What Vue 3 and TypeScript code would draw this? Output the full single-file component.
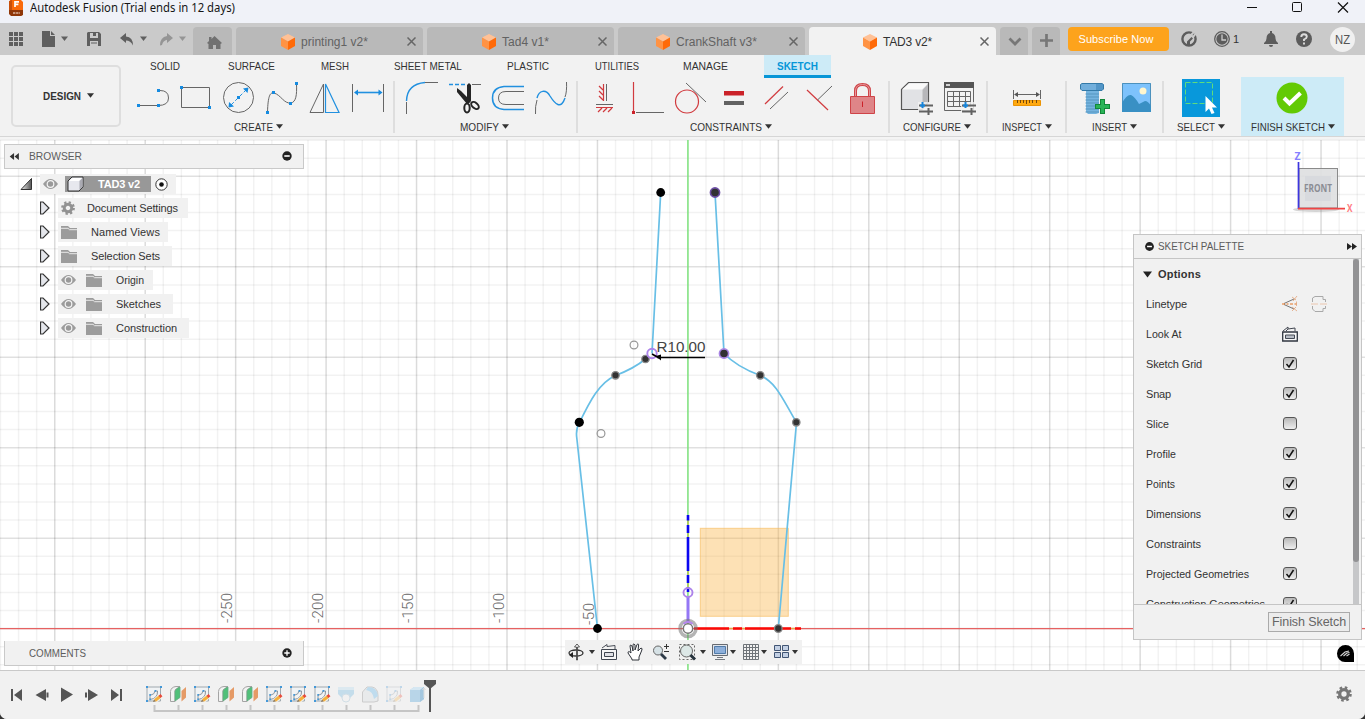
<script setup lang="ts">
import { h } from 'vue'

interface LabelProps { t: string; w: number; s?: number; b?: boolean; f?: string }

const pen = document.createElement('canvas').getContext('2d')!

/* Text run that occupies exactly `w` pixels: condensed when too wide, tracked out when too narrow. */
const Label = (p: LabelProps) => {
  const size = p.s ?? 11
  const family = p.f ?? 'Liberation Sans'
  pen.font = `${p.b ? 700 : 400} ${size}px "${family}"`
  const natural = pen.measureText(p.t).width
  const tight = natural > p.w * 1.03
  const spacing = tight ? 0 : (p.w - natural) / p.t.length
  return h('span', {
    style: {
      display: 'inline-block',
      whiteSpace: 'nowrap',
      width: `${p.w}px`,
      font: `${p.b ? 700 : 400} ${size}px/16px "${family}", sans-serif`,
      letterSpacing: `${spacing.toFixed(3)}px`,
    },
  }, tight
    ? [h('span', { style: { display: 'inline-block', transformOrigin: '0 50%', transform: `scaleX(${(p.w / natural).toFixed(4)})` } }, p.t)]
    : p.t)
}
Label.props = { t: String, w: Number, s: Number, b: Boolean, f: String }

const Caret = () => h('svg', { width: 7, height: 5, viewBox: '0 0 7 5', style: { marginTop: '-2px' } }, [
  h('path', { d: 'M0 .3H7L3.5 4.8Z', fill: 'currentColor' }),
])

const docs = [
  { name: 'printing1 v2*', w: 67, pad: 45, active: false },
  { name: 'Tad4 v1*', w: 47, pad: 55, active: false },
  { name: 'CrankShaft v3*', w: 81, pad: 38, active: false },
  { name: 'TAD3 v2*', w: 49, pad: 54, active: true },
]

const modes = [
  { name: 'SOLID', w: 30, gap: 29 },
  { name: 'SURFACE', w: 47, gap: 48 },
  { name: 'MESH', w: 28, gap: 46 },
  { name: 'SHEET METAL', w: 68, gap: 45 },
  { name: 'PLASTIC', w: 42, gap: 45 },
  { name: 'UTILITIES', w: 44, gap: 46 },
  { name: 'MANAGE', w: 45, gap: 44 },
]

const tree = [
  { name: 'Document Settings', w: 91, box: 130, eye: false, gear: true },
  { name: 'Named Views', w: 69, box: 110, eye: false, gear: false },
  { name: 'Selection Sets', w: 69, box: 114, eye: false, gear: false },
  { name: 'Origin', w: 28, box: 95, eye: true, gear: false },
  { name: 'Sketches', w: 45, box: 115, eye: true, gear: false },
  { name: 'Construction', w: 61, box: 131, eye: true, gear: false },
]

const options = [
  { name: 'Sketch Grid', w: 56, on: true },
  { name: 'Snap', w: 25, on: true },
  { name: 'Slice', w: 23, on: false },
  { name: 'Profile', w: 30, on: true },
  { name: 'Points', w: 29, on: true },
  { name: 'Dimensions', w: 55, on: true },
  { name: 'Constraints', w: 55, on: false },
  { name: 'Projected Geometries', w: 103, on: true },
  { name: 'Construction Geometries', w: 119, on: true },
]

const timeline = ['sketch', 'plane', 'sketch', 'plane', 'plane', 'sketch', 'sketch', 'sketch', 'loft', 'fillet', 'faded', 'extrude']

const step = 18.09
const columns = Array.from({ length: 76 }, (_, i) => ({ at: 687.9 + (i - 38) * step, major: (i - 38) % 5 === 0 }))
const rows = Array.from({ length: 30 }, (_, i) => ({ at: 628.6 + (i - 27) * step, major: (i - 27) % 5 === 0 }))
const ruler = [
  { t: '-250', x: 232 }, { t: '-200', x: 322.7 }, { t: '-150', x: 413 }, { t: '-100', x: 503.7 },
]
</script>

<template>
  <div class="app">
    <header class="titlebar">
      <svg class="logo" width="15" height="16" viewBox="0 0 15 16">
        <path d="M1 0H12L14 2V14L12 16H3L1 14Z" fill="#fa6a0a" />
        <path d="M0 1L3 0V10H0Z" fill="#c8500a" /><path d="M0 10H14V15L12 16H2L0 14Z" fill="#8f3708" />
        <path d="M6 7V1.8H10M6 4.4H9.4" stroke="#fff" stroke-width="1.7" fill="none" />
        <path d="M4 13H11" stroke="#ddb7a0" stroke-width="1.6" stroke-dasharray="2.4 .7" />
      </svg>
      <Label class="apptitle" t="Autodesk Fusion (Trial ends in 12 days)" :w="205" :s="12" f="Noto Sans" />
      <svg class="winbtns" width="130" height="23" viewBox="1235 0 130 23" fill="none" stroke="#111" stroke-width="1">
        <path d="M1247 7.5H1257" /><rect x="1292.5" y="2.5" width="9" height="9" rx="1" />
        <path d="M1338 2.5L1348 12.500M1348 2.500L1338 12.500" stroke-width="1.2" />
      </svg>
    </header>

    <div class="docbar">
      <svg class="quick" width="193" height="32" viewBox="0 23 193 32" fill="#5f5f5f">
        <path d="M9 32h4v4h-4zM14 32h4v4h-4zM19 32h4v4h-4zM9 37h4v4h-4zM14 37h4v4h-4zM19 37h4v4h-4zM9 42h4v4h-4zM14 42h4v4h-4zM19 42h4v4h-4z" />
        <path d="M42 31H50V36H55V47H42ZM51 31L55 35H51Z" /><path d="M61 36.500H68L64.500 41Z" />
        <path fill-rule="evenodd" d="M88 32H99L101 34V46H87V33ZM90 33V38H98V33H96V36H93V33ZM90 41V46H98V41Z" /><path d="M91 42.500H97V43.500H91Z" />
        <path d="M120 38L126 33V36.500Q133 37 133 45.500Q130.500 40.500 126 40.500V43Z" /><path d="M140 36.500H147L143.500 41Z" />
        <g fill="#959595"><path d="M173 38L167 33V36H167Q160 37 160 45.500L162 45Q163 40.500 167 39.700V43Z" /><path d="M179 36.500H186L182.500 41Z" /></g>
      </svg>
      <div class="hometab">
        <svg width="15" height="13" viewBox="0 0 15 13"><path d="M7.500 0L15 7L13.500 8V13H9V9H6V13H1.500V8L0 7L2 5V1H4.500V3Z" fill="#717171" /></svg>
      </div>
      <div v-for="d in docs" :key="d.name" class="doctab" :class="{ active: d.active }" :style="{ paddingLeft: d.pad + 'px' }">
        <svg width="14" height="16" viewBox="0 0 14 16"><path d="M7 0L14 3.500L7 7.500L0 3.500Z" fill="#ffc196" /><path d="M0 3.500L7 7.500V16L0 12Z" fill="#ff9344" /><path d="M14 3.500V12L7 16V7.500Z" fill="#ff6a08" /></svg>
        <Label class="docname" :t="d.name" :w="d.w" :s="12" />
        <svg class="close" width="9" height="9" viewBox="0 0 9 9"><path d="M.5.5L8.500 8.500M8.500.5L.5 8.500" stroke="currentColor" stroke-width="1.500" /></svg>
      </div>
      <div class="mini"><svg width="28" height="28" viewBox="0 0 28 28"><path d="M9.500 11.500L15 17L20.500 11.500" fill="none" stroke="#777" stroke-width="2.700" /></svg></div>
      <div class="mini"><svg width="28" height="28" viewBox="0 0 28 28"><path d="M8 13.500H21M14.500 7V20" stroke="#777" stroke-width="2.700" /></svg></div>
      <button class="subscribe"><Label t="Subscribe Now" :w="75" :s="11" /></button>
      <svg class="status" width="67" height="32" viewBox="1169 23 67 32">
        <circle cx="1189" cy="39" r="6.600" fill="none" stroke="#5c5c5c" stroke-width="2.400" />
        <path d="M1190 36L1194.500 31.500M1191 40L1196 33" stroke="#cacaca" stroke-width="2" />
        <path d="M1187 45V41.500L1191.500 37L1193 38.500L1190 41.500V45Z" fill="#5c5c5c" />
        <circle cx="1222" cy="39" r="7.300" fill="none" stroke="#5c5c5c" stroke-width="1.300" /><circle cx="1222" cy="39" r="5.700" fill="#5c5c5c" />
        <path d="M1222 34.500V40H1226" fill="none" stroke="#ccc" stroke-width="1.300" />
      </svg>
      <Label class="jobs" t="1" :w="6" :s="11" />
      <svg width="90" height="32" viewBox="1239 23 90 32">
        <path d="M1270 31H1272V33Q1275.500 34 1275.500 38.500Q1275.500 41.500 1278 43V44H1264V43Q1266.500 41.500 1266.500 38.500Q1266.500 34 1270 33ZM1269 45H1273Q1273 47 1271 47Q1269 47 1269 45" fill="#5c5c5c" />
        <circle cx="1304" cy="39" r="8" fill="#5c5c5c" />
        <path d="M1301.300 37Q1301.300 34.200 1304 34.200Q1306.800 34.200 1306.800 36.700Q1306.800 38.200 1304 39.500V41M1304 42.400V44.400" fill="none" stroke="#ddd" stroke-width="1.900" />
      </svg>
      <div class="avatar"><Label t="NZ" :w="15" :s="12" /></div>
    </div>

    <section class="ribbon">
      <div class="workspace"><Label t="DESIGN" :w="38" :s="11" b /><Caret /></div>
      <div class="ribbon-main">
        <nav class="modes">
          <Label v-for="m in modes" :key="m.name" :t="m.name" :w="m.w" :style="{ marginLeft: m.gap + 'px' }" />
          <div class="mode-on"><Label t="SKETCH" :w="41" b /></div>
        </nav>
        <div class="tools">
          <div class="group g-create">
            <div class="icons" fill="none">
              <svg width="39" height="40" viewBox="136 78 39 40"><path d="M140 105.500H158Q168.500 105.500 168.500 98Q168.500 90.500 160 90.500" class="gl" /><path class="bf" d="M137 104h3v3h-3zM157 104h3v3h-3zM157 89h3v3h-3z" /></svg>
              <svg width="42" height="40" viewBox="175 78 42 40"><path d="M181.500 87.500H209.500V107.500H181.500Z" class="gl" /><path class="bf" d="M180 86h3v3h-3zM208 106h3v3h-3z" /></svg>
              <svg width="43" height="40" viewBox="217 78 43 40"><circle cx="238.500" cy="97.500" r="15" class="gl" /><path class="bl" d="M231 105L246 90" stroke-dasharray="4 2" /><path class="bf" d="M237 96h3v3h-3zM243 88.500L248.500 87.500L247.500 93ZM229 102L228.500 107.500L234 106.500Z" /></svg>
              <svg width="43" height="40" viewBox="260 78 43 40"><path d="M267.500 112C268 96 270 92 274 93C281 95 284 104 291 103C296 102 297 95 296.500 84" class="gl" /><path class="bf" d="M266 111h3v3h-3zM272 91h3v3h-3zM289 102h3v3h-3zM295 82h3v3h-3z" /></svg>
              <svg width="41" height="40" viewBox="303 78 41 40"><path d="M323.500 84V112.500H310Z" class="gl" /><path d="M325.500 84V112.500H339Z" class="bl" stroke-width="1.200" /></svg>
              <svg width="46" height="40" viewBox="344 78 46 40"><path d="M352.500 84V112M383.500 84V112" class="gl" /><path class="bl" d="M356 92.500H380" stroke-width="1.600" /><path class="bf" d="M354 92.500L358 89.500V95.500ZM382.500 92.500L378.500 89.500V95.500Z" /></svg>
            </div>
            <div class="caption"><Label t="CREATE" :w="39" /><Caret /></div>
          </div>
          <div class="group g-modify">
            <div class="icons">
              <svg width="42" height="40" viewBox="400 78 42 40"><path d="M406.500 114V102M425 82.500H438" class="gl" /><path d="M406.500 101Q407 84 425 82.500" class="bl" stroke-width="1.400" /></svg>
              <svg width="44" height="40" viewBox="442 78 44 40"><path d="M449 84.500H467" class="bl" stroke-width="1.500" stroke-dasharray="4 2" /><path d="M472 84.500H481" class="gl" /><path d="M457 88L461 91L468 98L471 102L467 104L457 92ZM467 85L469 83L471 85V101H467Z" fill="#252525" /><ellipse cx="467" cy="108" rx="2.700" ry="4.400" fill="none" stroke="#252525" stroke-width="2" /><ellipse cx="475" cy="105.500" rx="2.700" ry="4.400" transform="rotate(-50 475 105.500)" fill="none" stroke="#252525" stroke-width="2" /></svg>
              <svg width="44" height="40" viewBox="486 78 44 40"><path d="M524 86.500H504Q492.500 87.500 492.500 98Q492.500 108.500 504 109.500H524" class="bl" stroke-width="1.500" /><path d="M524 91.500H506Q498.500 91.500 498.500 98Q498.500 104.500 506 104.500H524" class="gl" /></svg>
              <svg width="42" height="40" viewBox="530 78 42 40"><path d="M535.500 114Q535 106 537 100M566.500 82Q567 92 565 97" class="gl" /><path d="M537 98C539 90 546 89 550 96C555 104 561 110 565 98" class="bl" stroke-width="1.400" /></svg>
            </div>
            <div class="caption"><Label t="MODIFY" :w="39" /><Caret /></div>
          </div>
          <div class="group g-constraints">
            <div class="icons">
              <svg width="39" height="40" viewBox="586 78 39 40"><path class="rl" d="M603.500 84V101M599 86L603 90M599 91L603 95M599 96L603 100M596 107.500H613M598 112L602 108M603 112L607 108M608 112L612 108" /><path class="gl" d="M606.500 84V101M596 104.500H613" /></svg>
              <svg width="45" height="40" viewBox="625 78 45 40"><path class="rl" d="M633.500 82V112" /><path class="gl" d="M636 112.500H664" /><path d="M632 111h3v3h-3z" fill="#cb2229" /></svg>
              <svg width="45" height="40" viewBox="670 78 45 40"><circle cx="687" cy="101.500" r="11.500" class="rl" /><path class="gl" d="M686 83L706 102" /></svg>
              <svg width="41" height="40" viewBox="715 78 41 40"><path d="M724 91h20v4.500h-20z" fill="#cb2229" /><path d="M724 101h20v4h-20z" fill="#626262" /></svg>
              <svg width="46" height="40" viewBox="756 78 46 40"><path class="rl" d="M765 104L783 86.500" /><path class="gl" d="M770 109L788 92" /></svg>
              <svg width="40" height="40" viewBox="802 78 40 40"><path class="rl" d="M807 90L828 110" /><path class="gl" d="M817.500 100L832 86" /></svg>
              <svg width="45" height="40" viewBox="842 78 45 40"><path d="M855.500 96V91Q855.500 84.500 862.500 84.500Q869.500 84.500 869.500 91V96" fill="none" stroke="#cf4448" stroke-width="3" /><path d="M855.500 96V91Q855.500 84.500 862.500 84.500Q869.500 84.500 869.500 91V96" fill="none" stroke="#e69a9c" stroke-width="1" /><path d="M850.500 96.500H874.500V113.500H850.500Z" fill="#df8588" stroke="#cf4448" /><path d="M862.500 101.500V107" stroke="#cb2229" /></svg>
            </div>
            <div class="caption"><Label t="CONSTRAINTS" :w="72" /><Caret /></div>
          </div>
          <div class="group g-configure">
            <div class="icons">
              <svg width="43" height="40" viewBox="896 78 43 40"><path d="M901.500 89.500L908.500 82.500H928.500V102L922 109.500H901.500Z" fill="#e1e2e5" stroke="#555" stroke-width="1.200" /><path d="M902 89.500H922L928 83.500H909Z" fill="#fafafa" /><path d="M922.500 90L928 84V101L922.500 108Z" fill="#b7b7ba" /><path d="M918 102h16v13h-16z" fill="#f2f2f2" opacity=".85" /><path d="M919 105.500H933M919 111.500H933M928.500 108V115" stroke="#626262" stroke-width="2" /><path d="M922.500 102V108M920 105.500H925" stroke="#1584db" stroke-width="2" /></svg>
              <svg width="43" height="40" viewBox="939 78 43 40"><path d="M944.500 83V110.500H973.500V83" class="gl" /><path d="M944 82h30v6h-30z" fill="#555" /><path d="M946 85H950" stroke="#fff" stroke-width="1.500" /><path class="gl" d="M947.500 91.500H970.500V106.500H947.500ZM947.500 96.500H970M947.500 101.500H970M953.500 91V107M959.500 91V107M965.500 91V107" /><path d="M961 102h16v13h-16z" fill="#f2f2f2" opacity=".8" /><path d="M962 105.500H976M962 111.500H976M971.500 108V115" stroke="#626262" stroke-width="2" /><path d="M965.500 102V108M963 105.500H968" stroke="#1584db" stroke-width="2" /></svg>
            </div>
            <div class="caption"><Label t="CONFIGURE" :w="58" /><Caret /></div>
          </div>
          <div class="group g-inspect">
            <div class="icons"><svg width="40" height="40" viewBox="1007 78 40 40"><path class="gl" d="M1013.500 90V99M1040.500 90V99M1016 94.500H1038" /><path d="M1014 94.500L1018 92V97ZM1040 94.500L1036 92V97Z" fill="#555" /><path d="M1013.500 100.500h27v5h-27z" fill="#ffa910" stroke="#eb9405" /><path d="M1017.500 100V103M1020.500 100V103M1023.500 100V103M1026.500 100V104M1029.500 100V103M1032.500 100V103M1036.500 100V103" stroke="#75480a" /></svg></div>
            <div class="caption"><Label t="INSPECT" :w="40" /><Caret /></div>
          </div>
          <div class="group g-insert">
            <div class="icons">
              <svg width="42" height="40" viewBox="1075 78 42 40"><path d="M1086 90H1099V113L1096 114H1088L1086 112Z" fill="#75b4df" /><path d="M1085.500 94H1099M1085.500 97H1099M1085.500 100H1099M1085.500 103H1099M1085.500 106H1099M1085.500 109H1099M1085.500 112H1099" stroke="#5795bf" /><path d="M1080.500 84.500L1082 83.500H1102L1103.500 84.500V89L1102 90.500H1082L1080.500 89Z" fill="#72afdc" stroke="#347aa8" /><path d="M1096 84H1103V90H1096Z" fill="#3f86bb" opacity=".6" /><path d="M1095 106.500H1110M1102.500 99V114" stroke="#128739" stroke-width="5" /><path d="M1096 106.500H1109M1102.500 100V113" stroke="#29b457" stroke-width="3" /></svg>
              <svg width="40" height="40" viewBox="1117 78 40 40"><path d="M1122 83h29v29h-29z" fill="#7dc2fc" /><path d="M1122.500 83.500h28v28h-28z" fill="none" stroke="#4c91bd" /><path d="M1122 103Q1127 94 1131 95Q1135 97 1139 104L1145 101Q1148 101 1151 106V112H1122Z" fill="#3990c4" /><circle cx="1143" cy="91" r="3.500" fill="#fff6ce" /></svg>
            </div>
            <div class="caption"><Label t="INSERT" :w="35" /><Caret /></div>
          </div>
          <div class="group g-select">
            <div class="icons"><svg width="38" height="40" viewBox="1182 78 38 40"><path d="M1182 79h38v38h-38z" fill="#0898db" /><path d="M1185.500 82.500H1212.500V103.500H1185.500Z" fill="none" stroke="#5fdc7c" stroke-dasharray="5 2" /><path d="M1205.500 96L1217 107.500H1212L1214.500 113L1211.500 114L1209 108.500L1205.500 112Z" fill="#fff" /></svg></div>
            <div class="caption"><Label t="SELECT" :w="38" /><Caret /></div>
          </div>
          <div class="group g-finish">
            <div class="icons"><svg width="40" height="40" viewBox="1272 78 40 40"><circle cx="1292" cy="98" r="15.500" fill="#63ca04" /><path d="M1284 98L1289.500 103.500L1300.500 93" fill="none" stroke="#fff" stroke-width="4" /></svg></div>
            <div class="caption"><Label t="FINISH SKETCH" :w="74" /><Caret /></div>
          </div>
        </div>
      </div>
    </section>

    <main class="viewport">
      <svg class="scene" width="1365" height="533" viewBox="0 137 1365 533">
        <rect y="137" width="1365" height="3" fill="#f4f4f4" />
        <g stroke="#000">
          <path v-for="c in columns" :key="'c' + c.at" :d="`M${c.at} 140V670`" :stroke-opacity="c.major ? .14 : .05" stroke-width="1.500" />
          <path v-for="r in rows" :key="'r' + r.at" :d="`M0 ${r.at}H1365`" :stroke-opacity="r.major ? .12 : .05" stroke-width="1.500" />
        </g>
        <rect x="700.300" y="528.300" width="88" height="88" fill="#fbb13c" fill-opacity=".38" stroke="#f7b955" stroke-opacity=".6" />
        <path d="M687.900 140V670" stroke="#83e882" stroke-width="1.500" />
        <path d="M0 628.600H1365" stroke="#e66161" stroke-width="1.300" />
        <g class="ruler">
          <text v-for="n in ruler" :key="n.t" :transform="`translate(${n.x} 623) rotate(-90)`" textLength="30">{{ n.t }}</text>
          <text transform="translate(594 625) rotate(-90)" textLength="22">-50</text>
        </g>
        <g fill="none" stroke="#68bfe6" stroke-width="1.700">
          <path d="M660.700 192.500L652 353.500M645.500 359Q634 368.500 615.500 375.500C599 383 590 401 579.500 422.500Q575.500 429 576.800 438L597.500 628.500" />
          <path d="M715 192.500L724 353.500C735 365 748 371 760.300 375.500C777 383 783 400 796.500 422.500L778.300 628.500" />
        </g>
        <g stroke-width="2.600">
          <path d="M688 516V591" stroke="#b6c94f" stroke-width="1.500" /><path d="M688 515V520.500M688 525V533M688 537V571M688 575V583M688 587V592" stroke="#0b06f0" />
          <path d="M694 628.500H801" stroke="#e6a84a" stroke-width="1.500" /><path d="M694 628.500H729M733 628.500H742M745 628.500H791M795 628.500H801" stroke="#fb0808" />
          <path d="M688 597V623" stroke="#9477f5" stroke-width="3" />
        </g>
        <g fill="#000"><circle cx="660.700" cy="192.500" r="4.400" /><circle cx="579.300" cy="422.300" r="4.600" /><circle cx="597.500" cy="628.500" r="4.400" /></g>
        <g fill="#333" stroke="#888" stroke-width="1.300"><circle cx="645.500" cy="359" r="3.700" /><circle cx="615.500" cy="375.300" r="3.700" /><circle cx="760.300" cy="375.300" r="3.700" /><circle cx="796.300" cy="422.300" r="3.700" /><circle cx="778.300" cy="628.500" r="3.800" /></g>
        <g fill="#333" stroke="#a884e4" stroke-width="1.600"><circle cx="715" cy="192.500" r="4.600" stroke="#6d4fa5" /><circle cx="724" cy="353.500" r="4.600" /></g>
        <g fill="none" stroke="#979797" stroke-width="1.200"><circle cx="634" cy="345" r="3.900" /><circle cx="601" cy="433.500" r="3.900" /></g>
        <g fill="none" stroke="#ad83ea" stroke-width="1.900"><circle cx="652" cy="353.500" r="4.700" /><circle cx="688" cy="592.500" r="4.500" /></g>
        <circle cx="688" cy="628.500" r="8" fill="none" stroke="#777" stroke-opacity=".55" stroke-width="3.500" /><path d="M683.500 624A6 6 0 0 1 692.500 624" fill="none" stroke="#b787ee" stroke-width="2" /><circle cx="688" cy="628.500" r="4.700" fill="#fff" stroke="#777" stroke-width="1.500" />
        <path d="M657 357.500H705M652 354L660 358.500" stroke="#000" stroke-width="1.600" /><path d="M656 356L661 354.500V360.500Z" />
        <text class="dimension" x="656.500" y="352" textLength="49">R10.00</text>
        <g class="viewcube">
          <ellipse cx="1316" cy="209.500" rx="23" ry="2.500" fill="#777" opacity=".3" />
          <rect x="1299" y="168.500" width="38.500" height="39.500" fill="#dedfe1" fill-opacity=".92" stroke="#8a8a8a" /><rect x="1305" y="176" width="26" height="25" fill="#d8dade" />
          <path d="M1298.500 162V209" stroke="#3d36e0" stroke-width="1.700" /><path d="M1298 208.700H1345" stroke="#f04444" stroke-width="1.800" />
          <text x="1304" y="192" textLength="28" lengthAdjust="spacingAndGlyphs" fill="#8b8d94">FRONT</text><text x="1294.500" y="160" fill="#8580ff">Z</text><text x="1347" y="212" textLength="5.500" lengthAdjust="spacingAndGlyphs" fill="#ff7b80">X</text>
        </g>
        <path d="M1337 653.500A8.300 8.300 0 0 1 1354 653.500V662H1345A8.300 8.300 0 0 1 1337 653.500Z" fill="#000" /><path d="M1340.500 656L1345 652L1349 651M1343.500 656L1347 653L1349.500 652.500M1346.500 656L1349.500 654" fill="none" stroke="#d5d5d5" stroke-width="1.100" />
      </svg>

      <aside class="browser">
        <div class="panelhead">
          <svg width="11" height="7" viewBox="0 0 11 8"><path d="M5 0V8L0 4ZM10.500 0V8L5.500 4Z" fill="#333" /></svg>
          <Label class="heading" t="BROWSER" :w="53" />
          <svg class="round" width="10" height="10" viewBox="0 0 10 10"><circle cx="5" cy="5" r="4.700" fill="#222" /><path d="M2.300 5H7.700" stroke="#fff" stroke-width="1.600" /></svg>
        </div>
        <div class="node root">
          <svg class="twist" width="20" height="20" viewBox="20 174 20 20"><defs><linearGradient id="corner"><stop offset="0" stop-color="#eee" /><stop offset="1" stop-color="#555" /></linearGradient></defs><path d="M31.500 178.500V189.500H21Z" fill="url(#corner)" stroke="#333" /></svg>
          <div class="rootbox">
            <svg width="15" height="10" viewBox="0 0 15 10"><path d="M0 5Q7.500-5 15 5Q7.500 15 0 5Z" fill="#9c9c9c" /><circle cx="7.500" cy="5" r="3.300" fill="#999" stroke="#f4f4f4" stroke-width="1.200" /></svg>
            <div class="chip">
              <svg width="17" height="16" viewBox="0 0 17 16"><path d="M1 5L5 1H16V11L12 15H1Z" fill="#e7e8ee" stroke="#333" /><path d="M2 5H12L15 2H6Z" fill="#fff" /><path d="M12.500 5L15.500 2V11L12.500 14Z" fill="#aaaab2" /></svg>
              <Label t="TAD3 v2" :w="42" b />
            </div>
            <svg width="13" height="13" viewBox="0 0 13 13"><circle cx="6.500" cy="6.500" r="5.700" fill="#fff" stroke="#333" /><circle cx="6.500" cy="6.500" r="2.300" fill="#111" /></svg>
          </div>
        </div>
        <div v-for="n in tree" :key="n.name" class="node">
          <svg class="twist" width="18" height="20" viewBox="40 198 18 20"><path d="M40.500 202H43L49 208L43 214H40.500Z" fill="#e4e6eb" stroke="#333" stroke-width="1.200" /></svg>
          <div class="nodebox" :class="{ folder: !n.gear }" :style="{ width: n.box + 'px' }">
            <svg v-if="n.eye" class="eye" width="15" height="10" viewBox="0 0 15 10"><path d="M0 5Q7.500-5 15 5Q7.500 15 0 5Z" fill="#9c9c9c" /><circle cx="7.500" cy="5" r="3.300" fill="#999" stroke="#f4f4f4" stroke-width="1.200" /></svg>
            <svg v-if="n.gear" class="geartree" width="14" height="14" viewBox="-8 -8 16 16"><circle r="4.300" fill="none" stroke="#929292" stroke-width="3.400" /><circle r="6.500" fill="none" stroke="#929292" stroke-width="2.800" stroke-dasharray="2.550" /></svg>
            <svg v-else class="dir" width="16" height="13" viewBox="0 0 16 13"><path d="M0 0H7L9 2H16V13H0Z" fill="#9c9c9c" /><path d="M0 2.300H7L8.500 3.700H16" fill="none" stroke="#e9e9e9" /></svg>
            <Label :t="n.name" :w="n.w" />
          </div>
        </div>
      </aside>

      <div class="comments">
        <Label t="COMMENTS" :w="57" />
        <svg width="10" height="10" viewBox="0 0 10 10"><circle cx="5" cy="5" r="4.700" fill="#222" /><path d="M2.300 5H7.700M5 2.300V7.700" stroke="#fff" stroke-width="1.300" /></svg>
      </div>

      <svg class="navbar" width="237" height="24" viewBox="565 640 237 24" fill="none">
        <g stroke="#333"><ellipse cx="576" cy="653" rx="7" ry="3" stroke-width="1.300" /><path d="M576.500 660V647H574.500L577 644L579.500 647H577.500V660Z" fill="#fff" stroke-width=".8" /><path d="M569 655L573 652V658Z" fill="#222" stroke="none" /></g>
        <g fill="#333"><path d="M589 650H595L592 654ZM700 650H706L703 654ZM730 650H736L733 654ZM761 650H767L764 654ZM792 650H798L795 654Z" /></g>
        <path d="M601.500 649.500H616.500V659.500H601.500Z" fill="#f6f6f6" stroke="#404650" /><path d="M604.500 652.500H613.500V656.500H604.500Z" fill="#dfe0e5" stroke="#404650" /><path d="M602 648L607 644.500V646.500L615 645.500V649" stroke="#4a4f58" />
        <path d="M632 659L628 653Q628 650 631 653L630 646Q630 644 632 646L633 651V644.500Q634 643 635 645V650L637 644.500Q639 643 638.500 646L638 651L641 648Q643 648 641.500 651L639 657V660H632Z" fill="#fff" stroke="#30343b" stroke-width="1" />
        <circle cx="658" cy="650.500" r="4.500" fill="#d6e2e6" stroke="#666" /><path d="M661 654L666 659" stroke="#2e3b48" stroke-width="2.800" /><path d="M664 646.500H669M666.500 644V649M664 651.500H669" stroke="#333" />
        <path d="M679.500 644.500H694.500V659.500H679.500Z" stroke="#666" stroke-dasharray="2 2" /><circle cx="686.500" cy="651" r="6" fill="#dde8e7" stroke="#666" /><path d="M690.500 655L695 659.500" stroke="#26333d" stroke-width="3" />
        <path d="M712.500 644.500H727.500V655.500H712.500Z" fill="#e0e4eb" stroke="#666a70" /><path d="M714.500 646.500H725.500V653.500H714.500Z" fill="#8dafda" stroke="#517ba8" /><path d="M717 657.500H723M715 659.500H725" stroke="#747981" stroke-width="1" />
        <path d="M743.500 644.500H758.500V659.500H743.500ZM746.500 645V659M749.500 645V659M752.500 645V659M755.500 645V659M744 647.500H758M744 650.500H758M744 653.500H758M744 656.500H758" stroke="#6f7479" /><g fill="#c3d0e4" stroke="#415574"><path d="M774.500 645.500H780.500V650.500H774.500ZM782.500 645.500H788.500V650.500H782.500ZM774.500 652.500H780.500V657.500H774.500ZM782.500 652.500H788.500V657.500H782.500Z" /></g>
      </svg>

      <aside class="palette">
        <div class="palette-head">
          <svg width="9" height="9" viewBox="0 0 10 10"><circle cx="5" cy="5" r="4.900" fill="#222" /><path d="M2.300 5H7.700" stroke="#fff" stroke-width="1.600" /></svg>
          <Label class="ptitle" t="SKETCH PALETTE" :w="86" />
          <svg class="expand" width="10" height="7" viewBox="0 0 10 7"><path d="M0 0V7L5 3.500ZM5 0V7L10 3.500Z" fill="#222" /></svg>
        </div>
        <div class="palette-body">
          <div class="rowsbox">
            <div class="opt title"><svg width="10" height="7" viewBox="0 0 10 7"><path d="M0 .5H9L4.500 6.500Z" fill="#222" /></svg><Label t="Options" :w="43" b /></div>
            <div class="opt">
              <Label t="Linetype" :w="41" />
              <svg class="pair" width="46" height="18" viewBox="1281 295 46 18" fill="none">
                <path d="M1294 299L1284 303.500M1284 304.500L1294 309" stroke="#777" /><path d="M1282 304H1298" stroke="#e87624" stroke-width="1.100" stroke-dasharray="3 1.500 2 1.500" /><path d="M1292 297L1296 300M1293 301L1297 296M1292 311L1296 307M1292 307L1297 311M1296.500 301.500V306" stroke="#e09a6a" stroke-width=".7" />
                <path d="M1312.500 302V298L1315 296.500H1323V299.500H1325.500V302M1312.500 306V309L1315 311.500H1323V308.500H1325.500V306" stroke="#a9a9a9" /><path d="M1311 304H1327" stroke="#ebbd9e" stroke-width=".8" stroke-dasharray="7 2" />
              </svg>
            </div>
            <div class="opt"><Label t="Look At" :w="36" /><svg class="look" width="16" height="16" viewBox="0 0 16 16" fill="none"><path d="M.7 6H15.300V15H.7Z" fill="#f8f8f8" stroke="#303640" stroke-width="1.300" /><path d="M3.500 9H12.500V12.500H3.500Z" fill="#b7bcc5" stroke="#444a55" /><path d="M1 5L6 1V3L13 2V5M6 3L4 5" stroke="#424751" /></svg></div>
            <div v-for="o in options" :key="o.name" class="opt">
              <Label :t="o.name" :w="o.w" />
              <span class="check"><svg v-if="o.on" width="12" height="12" viewBox="0 0 12 12"><path d="M2.500 6L5 9L9.500 2" fill="none" stroke="#111" stroke-width="1.500" /></svg></span>
            </div>
          </div>
          <div class="scroll"><div class="thumb"></div></div>
        </div>
        <div class="palette-foot"><button><Label t="Finish Sketch" :w="74" :s="12.5" /></button></div>
      </aside>
    </main>

    <footer class="timeline">
      <svg class="playback" width="142" height="49" viewBox="0 670 142 49" fill="#555"><path d="M11 689h2v12h-2zM22 689V701L14 695ZM35.500 695L46 689V701ZM46.500 692.500h2v5h-2zM61 687.500L73 694.500L61 702ZM85 692.500h2v5h-2zM88 689V701L98 695ZM111 689V701L119 695ZM120 689h2v12h-2z" /></svg>
      <div class="track">
        <div class="features">
          <svg v-for="(k, i) in timeline" :key="i" width="24" height="24" viewBox="0 0 24 24" fill="none">
            <g v-if="k === 'sketch' || k === 'faded'" :opacity="k === 'faded' ? .28 : 1">
              <path d="M5 5H18.500V19H5Z" fill="#f0f3f5" stroke="#9fa8ae" /><path d="M8 17.500V13.500Q8 13 9 13Q12.500 12.500 13 9H15.500Q16 16.500 8 17.500" stroke="#8c959c" /><path d="M4 4h2v2h-2zM18 4h2v2h-2zM4 18h2v2h-2zM7.300 16.500h1.700v1.700h-1.700zM7.300 12h1.700v1.700h-1.700zM12.500 8h1.700v1.700h-1.700z" fill="#4398d8" /><path d="M13 19L18.500 14" stroke="#f6f3ea" stroke-width="4.500" /><path d="M13 18.500L18 14.500" stroke="#f5b03c" stroke-width="3" /><path d="M17.500 14.800L19.500 13.200" stroke="#e8483a" stroke-width="3" /><path d="M11 20L12 17.500L13.800 19.300Z" fill="#8a7452" />
            </g>
            <g v-else-if="k === 'plane'"><path d="M4.500 9.500Q5 5 10 4.500H14L9 8V19.500H4.500Z" fill="#f2f2f2" stroke="#a4a4a4" /><path d="M9 9.500Q9.500 6.500 14 5V15.500L9 19Z" fill="#50c079" stroke="#67a883" stroke-width=".8" /><path d="M15.500 9L20 5V15.500L15.500 19.500Z" fill="#e59a66" /></g>
            <g v-else-if="k === 'loft'" opacity=".85"><path d="M4 5H20V12L16 16H8L4 12Z" fill="#bddaea" /><path d="M4 5H20V8H4Z" fill="#d9e8f0" /><circle cx="12" cy="16" r="4" fill="#f2f2f2" stroke="#ccdbe4" /></g>
            <g v-else-if="k === 'fillet'"><path d="M4.500 10L9 5H14Q20 6 20 14V19L16 20H4.500Z" fill="#e8eaeb" stroke="#ccc" /><path d="M10 5Q19 5 20 14L16 17Q15 9 8 8Z" fill="#bfdcee" /></g>
            <g v-else><path d="M4 8L8 5H18V17L14 20H4Z" fill="#b8d5e8" /><path d="M4 8L8 5H18L14 8Z" fill="#d5e7f2" /><path d="M18 5V17L14 20V8Z" fill="#a4c7df" /><path d="M18 16V6M16.500 8L18 6L19.500 8" stroke="#dcdcdc" /></g>
          </svg>
        </div>
        <svg class="rail" width="288" height="8" viewBox="142 704 288 8"><path d="M154.500 705V711M178.500 705V711M202.500 705V711M226.500 705V711M250.500 705V711M274.500 705V711M298.500 705V711M322.500 705V711M346.500 705V711M370.500 705V711M394.500 705V711M418.500 705V711M153.500 711H419.500" stroke="#c5c5c5" stroke-width="2" /></svg>
      </div>
      <svg class="marker" width="14" height="34" viewBox="423 679 14 34"><path d="M424 680H436V684L430 689L424 684Z" fill="#555" /><path d="M430 685V712" stroke="#555" stroke-width="2" /></svg>
      <svg class="settings" width="16" height="16" viewBox="-8 -8 16 16"><circle r="4.300" fill="none" stroke="#777" stroke-width="3.300" /><circle r="6.500" fill="none" stroke="#777" stroke-width="2.600" stroke-dasharray="2.550" /></svg>
    </footer>
  </div>
</template>

<style>
html, body { margin: 0; background: #333; overflow: hidden; }
</style>

<style scoped>
.app { width: 1365px; height: 719px; display: flex; flex-direction: column; overflow: hidden; background: #f1f1f1; color: #333; font-family: "Liberation Sans", sans-serif; border-radius: 0 0 7px 7px; }
.app * { box-sizing: border-box; }
svg { display: block; flex: none; }
button { padding: 0; border: 0; }
.titlebar { height: 23px; flex: none; display: flex; align-items: flex-start; background: #f0f2f8; color: #161616; padding-left: 9px; }
.logo { margin-right: 6px; }
.winbtns { margin-left: auto; }
.docbar { height: 32px; flex: none; display: flex; background: #cacaca; }
.hometab { width: 39px; height: 28px; margin: 4px 4px 0 0; border-radius: 4px 4px 0 0; background: #b9b9b9; display: flex; align-items: center; justify-content: center; padding: 2px 0 0 3px; }
.doctab { width: 187px; height: 28px; margin: 4px 4px 0 0; border-radius: 4px 4px 0 0; background: #b9b9b9; color: #626262; display: flex; padding-top: 7px; flex: none; }
.doctab.active { background: #f2f2f2; color: #333; }
.docname { margin: 0 0 0 6px; }
.close { margin: 3px 7px 0 auto; color: #666; }
.mini { width: 28px; height: 28px; margin: 4px 4px 0 0; border-radius: 4px 4px 0 0; background: #b9b9b9; }
.subscribe { width: 101px; height: 24px; margin: 4px 0 0 4px; border-radius: 4px; background: #fda31c; color: #fff; padding-right: 5px; }
.jobs { margin: 8px 0 0 -3px; width: 7px; }
.avatar { width: 25px; height: 25px; margin: 4px 0 0 1px; border-radius: 50%; background: #f0f0f0; display: flex; align-items: center; justify-content: center; color: #555; }
.ribbon { height: 82px; flex: none; display: flex; background: #f2f2f2; border-bottom: 1px solid #d6d6d6; }
.workspace { width: 110px; height: 62px; margin: 10px 0 0 11px; border: 2px solid #dedede; border-radius: 5px; display: flex; align-items: center; padding-left: 30px; gap: 6px; }
.ribbon-main { flex: 1; display: flex; flex-direction: column; }
.modes { height: 23px; display: flex; padding-top: 0; line-height: 16px; }
.modes > span { margin-top: 3px; }
.mode-on { width: 67px; height: 23px; margin-left: 36px; padding: 3px 0 0 13px; display: flex; background: #cdebf7; border-bottom: 3px solid #0696d7; color: #0696d7; }
.tools { display: flex; height: 58px; }
.group { height: 58px; position: relative; display: flex; flex-direction: column; }
.group:not(.g-finish)::after { content: ""; position: absolute; right: -1px; top: 3px; width: 2px; height: 52px; background: #dedede; }
.icons { height: 40px; display: flex; }
.caption { display: flex; gap: 3px; align-items: center; justify-content: center; height: 16px; margin-top: 1px; }
.gl { stroke: #666; fill: none; stroke-width: 1; }
.bl { stroke: #2190df; fill: none; }
.bf { fill: #168be0; }
.rl { stroke: #d13a3e; fill: none; stroke-width: 1.2; }
.g-create { width: 273px; } .g-create .icons { padding-left: 15px; } .g-create .caption { padding-left: 1px; }
.g-modify { width: 183px; } .g-modify .icons { padding-left: 6px; } .g-modify .caption { padding-right: 2px; }
.g-constraints { width: 312px; } .g-constraints .icons { padding-left: 9px; } .g-constraints .caption { padding-right: 4px; }
.g-configure { width: 98px; } .g-configure .icons { padding-left: 7px; } .g-configure .caption { padding-right: 2px; }
.g-inspect { width: 79px; } .g-inspect .icons { padding-left: 20px; }
.g-insert { width: 97px; } .g-insert .icons { padding-left: 9px; }
.g-select { width: 78px; } .g-select .icons { padding-left: 19px; } .g-select .caption { padding-right: 3px; }
.g-select::after { display: none; }
.g-finish { width: 103px; background: #cdebf7; margin-top: -1px; padding-top: 1px; height: 59px; } .g-finish .icons { padding-left: 31px; } .g-finish .caption { padding-left: 1px; }
.viewport { height: 533px; flex: none; position: relative; background: #fff; overflow: hidden; }
.scene { position: absolute; left: 0; top: 0; }
.ruler text { font: 15px "Roboto", sans-serif; font-weight: 300; fill: #666; }
.dimension { font: 15.2px "Liberation Sans", sans-serif; fill: #444; }
.viewcube text { font: bold 10.5px "Open Sans", sans-serif; }
.browser { position: absolute; left: 4px; top: 7px; width: 300px; }
.panelhead { width: 300px; height: 25px; border: 1px solid #c9c9c9; background: #f1f1f1; display: flex; align-items: center; padding: 0 11px 1px 4px; color: #5c5c5c; }
.heading { margin-left: 9px; }
.round { margin-left: auto; }
.node { height: 20px; margin-top: 4px; padding-left: 36px; display: flex; align-items: center; }
.root { margin-top: 5px; padding-left: 16px; }
.rootbox { height: 20px; width: 136px; background: #f1f1f1; display: flex; align-items: center; padding-left: 3px; }
.chip { width: 86px; height: 16px; background: #989898; color: #fff; display: flex; align-items: center; margin: 0 4px 0 7px; padding-left: 2px; gap: 14px; }
.nodebox { height: 20px; background: #f1f1f1; display: flex; align-items: center; padding-left: 3px; }
.geartree { margin-right: 12px; }
.dir { margin-right: 14px; }
.eye { margin-right: 10px; }
.comments { position: absolute; left: 4px; top: 504px; width: 300px; height: 25px; background: #f1f1f1; border: 1px solid #c9c9c9; border-top: 0; display: flex; align-items: center; justify-content: space-between; padding: 0 11px 1px 24px; color: #5c5c5c; }
.navbar { position: absolute; left: 565px; top: 503px; background: #f1f1f1; }
.palette { position: absolute; left: 1133px; top: 97px; width: 229px; height: 406px; border: 1px solid #c5c5c5; background: #f1f1f1; display: flex; flex-direction: column; }
.palette-head { height: 24px; flex: none; border-bottom: 1px solid #c5c5c5; display: flex; align-items: center; padding: 0 4px 0 11px; gap: 4px; color: #5c5c5c; }
.ptitle { margin-top: -1px; }
.expand { margin-left: auto; }
.palette-body { height: 345px; flex: none; display: flex; overflow: hidden; }
.rowsbox { width: 219px; flex: none; }
.opt { height: 30px; display: flex; align-items: center; padding-left: 12px; }
.title { padding-left: 9px; gap: 5px; }
.pair { margin: 0 26px 0 auto; }
.look { margin: 0 55px 0 auto; }
.check { width: 14px; height: 13px; margin: -1px 56px 0 auto; border: 1px solid #555; border-radius: 3px; background: linear-gradient(#b9b9b9, #eee); }
.scroll { width: 6px; background: #c6c7c9; height: 345px; }
.thumb { width: 6px; height: 303px; background: #929294; border-radius: 3px; }
.palette-foot { flex: 1; border-top: 1px solid #c5c5c5; display: flex; justify-content: flex-end; padding: 7px 11px 0 0; }
.palette-foot button { width: 82px; height: 20px; border: 1px solid #aaa; background: #ececec; color: #666; }
.timeline { height: 49px; flex: none; display: flex; border-top: 1px solid #c9c9c9; background: #f1f1f1; }
.playback { margin-top: -1px; }
.track { width: 281px; }
.features { width: 288px; display: flex; margin-top: 11px; }
.rail { margin-top: -2px; }
.marker { margin-top: 8px; }
.settings { margin: 15px 13px 0 auto; }
</style>
